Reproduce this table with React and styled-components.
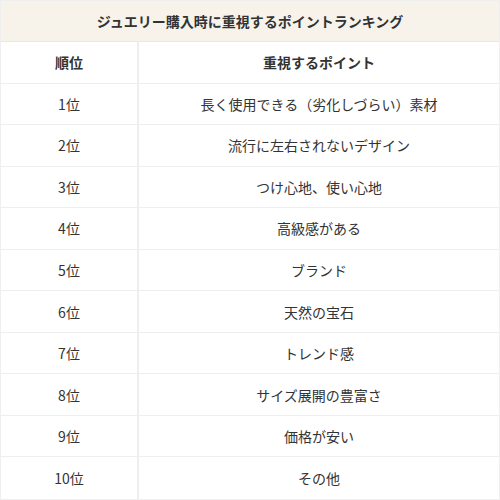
import styled, { createGlobalStyle } from "styled-components";

const GlobalStyle = createGlobalStyle`
  html, body {
    margin: 0;
    padding: 0;
    background: #ffffff;
  }
  body {
    font-family: "Noto Sans CJK JP", "Noto Sans", sans-serif;
    color: #333333;
  }
`;

const rankings = [
  "長く使用できる（劣化しづらい）素材",
  "流行に左右されないデザイン",
  "つけ心地、使い心地",
  "高級感がある",
  "ブランド",
  "天然の宝石",
  "トレンド感",
  "サイズ展開の豊富さ",
  "価格が安い",
  "その他",
];

const Table = styled.div`
  width: 500px;
  height: 500px;
  box-sizing: border-box;
  display: grid;
  grid-template-columns: 138px 1fr;
  grid-template-rows: 41px repeat(11, 1fr);
  border: 1px solid #efefef;
`;

const Title = styled.div`
  grid-column: 1 / -1;
  background: #f7f3eb;
  display: flex;
  align-items: center;
  justify-content: center;
  font-size: 14px;
  font-weight: 700;
  border-bottom: 1px solid #ece8e0;
`;

const Cell = styled.div`
  display: flex;
  align-items: center;
  justify-content: center;
  font-size: 14px;
  font-weight: ${(p) => (p.$head ? 700 : 400)};
  border-bottom: ${(p) => (p.$last ? "none" : "1px solid #eeeeee")};
  border-right: ${(p) => (p.$rank ? "2px solid #eeeeee" : "none")};
`;

export default function App() {
  return (
    <>
      <GlobalStyle />
      <Table>
        <Title>ジュエリー購入時に重視するポイントランキング</Title>
        <Cell $head $rank>順位</Cell>
        <Cell $head>重視するポイント</Cell>
        {rankings.map((item, i) => {
          const last = i === rankings.length - 1;
          return [
            <Cell key={`r${i}`} $rank $last={last}>
              {i + 1}位
            </Cell>,
            <Cell key={`p${i}`} $last={last}>
              {item}
            </Cell>,
          ];
        })}
      </Table>
    </>
  );
}
